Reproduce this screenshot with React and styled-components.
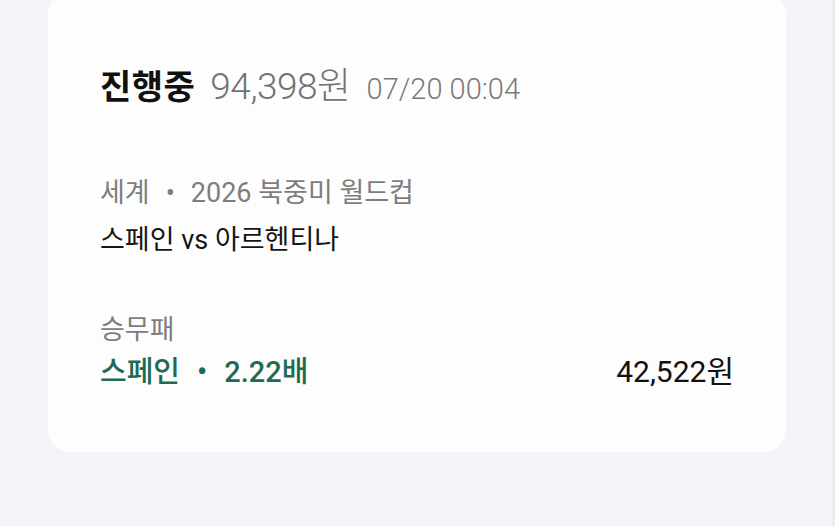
import React from "react";
import styled, { createGlobalStyle } from "styled-components";

const GlobalStyle = createGlobalStyle`
  html, body {
    margin: 0;
    padding: 0;
    background: #f3f4f8;
  }
  body {
    font-family: Roboto, "Noto Sans CJK KR", "Noto Sans", sans-serif;
    -webkit-font-smoothing: antialiased;
  }
`;

const Page = styled.div`
  width: 835px;
  height: 526px;
  overflow: hidden;
  background: #f3f4f8;
  border-right: 3px solid #ebecf0;
  box-sizing: border-box;
`;

const Card = styled.div`
  margin: -8px 0 0 48px;
  width: 738px;
  height: 460px;
  box-sizing: border-box;
  background: #fdfdfd;
  border-radius: 22px;
  padding: 73px 52px 0 52px;
  display: flex;
  flex-direction: column;
`;

const Header = styled.div`
  display: flex;
  align-items: baseline;
  line-height: 44px;
`;

const Status = styled.span`
  font-size: 34px;
  font-weight: 700;
  color: #111;
  letter-spacing: 0.5px;
`;

const Amount = styled.span`
  margin-left: 15px;
  font-size: 37px;
  font-weight: 300;
  color: #737373;
  letter-spacing: -0.5px;
`;

const Time = styled.span`
  margin-left: 16px;
  font-size: 29px;
  font-weight: 300;
  color: #7a7a7a;
`;

const Section = styled.div`
  display: flex;
  flex-direction: column;
  gap: ${(p) => p.$gap}px;
  margin-top: ${(p) => p.$top}px;
`;

const Label = styled.div`
  font-size: 27px;
  color: #7d7d7d;
  line-height: 34px;
`;

const Dot = styled.span`
  margin: 0 ${(p) => p.$space}px;
`;

const Match = styled.div`
  font-size: 27px;
  color: #151515;
  line-height: 34px;
`;

const PickRow = styled.div`
  display: flex;
  justify-content: space-between;
  align-items: baseline;
  line-height: 36px;
`;

const Pick = styled.span`
  font-size: 29px;
  font-weight: 500;
  color: #1f6b52;
`;

const Payout = styled.span`
  font-size: 30px;
  font-weight: 400;
  color: #111;
`;

export default function App() {
  return (
    <Page>
      <GlobalStyle />
      <Card>
        <Header>
          <Status>진행중</Status>
          <Amount>94,398원</Amount>
          <Time>07/20 00:04</Time>
        </Header>
        <Section $top={65} $gap={13}>
          <Label>
            세계<Dot $space={16}>•</Dot>2026 북중미 월드컵
          </Label>
          <Match>스페인 vs 아르헨티나</Match>
        </Section>
        <Section $top={56} $gap={7}>
          <Label>승무패</Label>
          <PickRow>
            <Pick>
              스페인<Dot $space={17}>•</Dot>2.22배
            </Pick>
            <Payout>42,522원</Payout>
          </PickRow>
        </Section>
      </Card>
    </Page>
  );
}
